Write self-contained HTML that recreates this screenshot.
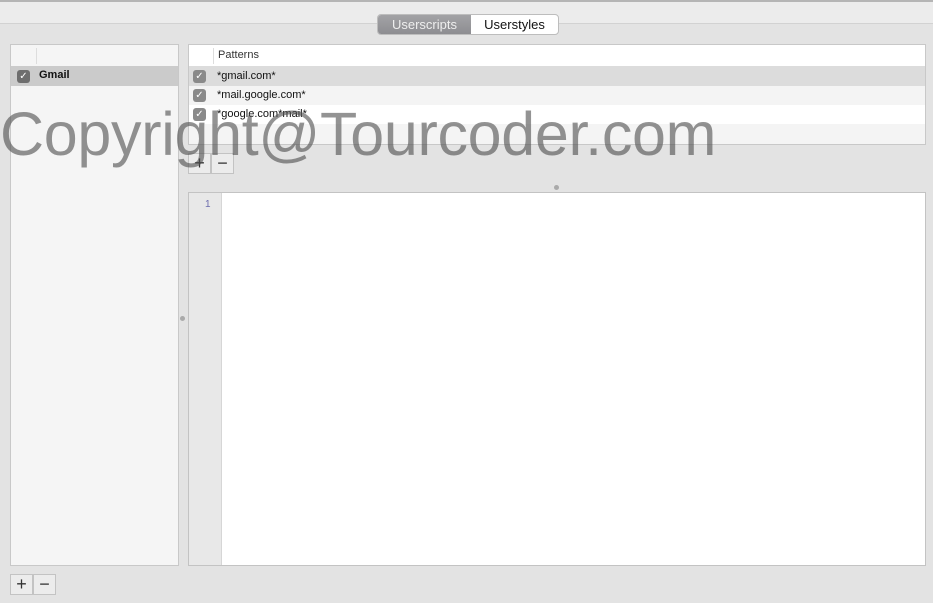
<!DOCTYPE html>
<html><head><style>
body{margin:0;width:933px;height:603px;background:#e3e3e3;font-family:"Liberation Sans",sans-serif;position:relative;overflow:hidden;font-size:12px}
.a{position:absolute;box-sizing:border-box}
.cb{position:absolute;width:13px;height:13px;border-radius:3px;background:#8a8a8a;color:#fff;font-size:10px;line-height:13px;text-align:center}
.btn{position:absolute;width:23px;height:21px;border:1px solid #c3c3c3;background:#ececec;box-sizing:border-box;font-size:18px;line-height:18px;text-align:center;color:#333}
</style></head><body>
<div class="a" style="left:0;top:0;width:933px;height:2px;background:#b5b5b5"></div>
<div class="a" style="left:0;top:2px;width:933px;height:22px;background:#ececec;border-bottom:1px solid #d2d2d2"></div>
<div class="a" style="left:377px;top:14px;width:182px;height:21px;border:1px solid #bdbdbd;border-radius:4px;background:#fff;overflow:hidden">
<div class="a" style="left:0;top:0;width:93px;height:19px;background:linear-gradient(#a3a3a6,#8d8d91);color:#eee;font-size:13px;line-height:19px;text-align:center">Userscripts</div>
<div class="a" style="left:93px;top:0;width:87px;height:19px;color:#111;font-size:13px;line-height:19px;text-align:center">Userstyles</div>
</div>
<div class="a" style="left:10px;top:44px;width:169px;height:522px;background:#f5f5f5;border:1px solid #c8c8c8">
<div class="a" style="left:25px;top:3px;width:1px;height:16px;background:#ddd"></div>
<div class="a" style="left:0;top:21px;width:167px;height:20px;background:#cbcbcb"></div>
<div class="cb" style="left:6px;top:25px;background:#6e6e6e">✓</div>
<div class="a" style="left:28px;top:24px;font-size:11px;font-weight:bold;color:#111">Gmail</div>
</div>
<div class="a" style="left:180px;top:316px;width:5px;height:5px;border-radius:50%;background:#aaa"></div>
<div class="a" style="left:188px;top:44px;width:738px;height:101px;background:#fff;border:1px solid #c8c8c8">
<div class="a" style="left:24px;top:3px;width:1px;height:16px;background:#ddd"></div>
<div class="a" style="left:29px;top:4px;color:#333;font-size:11px">Patterns</div>
<div class="a" style="left:0;top:21px;width:736px;height:20px;background:#dcdcdc"></div>
<div class="a" style="left:0;top:41px;width:736px;height:19px;background:#f4f4f4"></div>
<div class="a" style="left:0;top:79px;width:736px;height:20px;background:#f4f4f4"></div>
<div class="cb" style="left:4px;top:25px">✓</div><div class="a" style="left:28px;top:25px;font-size:11px;color:#111">*gmail.com*</div>
<div class="cb" style="left:4px;top:44px">✓</div><div class="a" style="left:28px;top:44px;font-size:11px;color:#111">*mail.google.com*</div>
<div class="cb" style="left:4px;top:63px">✓</div><div class="a" style="left:28px;top:63px;font-size:11px;color:#111">*google.com*mail*</div>
</div>
<div class="btn" style="left:188px;top:153px">+</div><div class="btn" style="left:211px;top:153px">−</div>
<div class="a" style="left:554px;top:185px;width:5px;height:5px;border-radius:50%;background:#aaa"></div>
<div class="a" style="left:188px;top:192px;width:738px;height:374px;background:#fff;border:1px solid #c3c3c3">
<div class="a" style="left:0;top:0;width:33px;height:372px;background:#e8e8e8;border-right:1px solid #d6d6d6"></div>
<div class="a" style="left:16px;top:6px;font-size:10px;color:#6c6cae">1</div>
</div>
<div class="btn" style="left:10px;top:574px">+</div><div class="btn" style="left:33px;top:574px">−</div>
<div class="a" style="left:0;top:99px;font-size:61px;color:rgba(80,80,80,0.62);white-space:nowrap;letter-spacing:-0.3px">Copyright@Tourcoder.com</div>
</body></html>
